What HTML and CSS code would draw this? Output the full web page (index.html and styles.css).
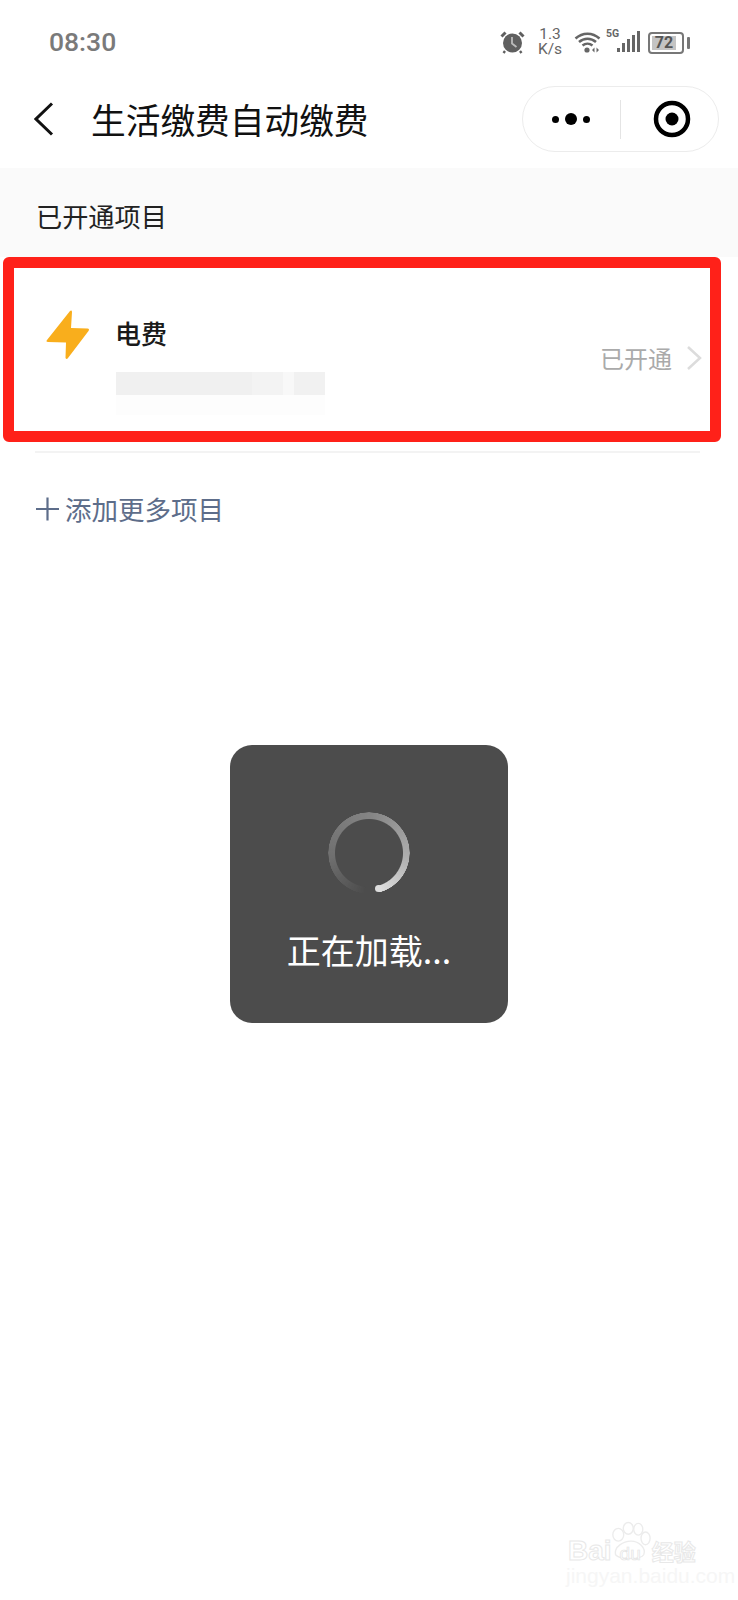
FILE: index.html
```html
<!DOCTYPE html>
<html lang="zh-CN">
<head>
<meta charset="utf-8">
<title>生活缴费自动缴费</title>
<link rel="stylesheet" href="styles.css">
</head>
<body>
<div class="page">
  <div class="status">
    <span class="time">08:30</span>
    <div class="status-icons">
      <svg class="ic-alarm" width="25" height="24" viewBox="0 0 25 24"><circle cx="12.500" cy="13" r="9.500" fill="#5f5f5f"/><path d="M12 7V13.500L16.500 17" fill="none" stroke="#bbb" stroke-width="1.800"/><path d="M1.500 6.500L5.500 2.500M23.500 6.500L19.500 2.500" stroke="#5f5f5f" stroke-width="3"/><path d="M5 21L3.500 23M20 21L21.500 23" stroke="#5f5f5f" stroke-width="2.400"/></svg>
      <div class="speed"><span>1.3</span><span>K/s</span></div>
      <svg class="ic-wifi" width="27" height="24" viewBox="0 0 26 24"><path d="M1 8.500C8 2 18 2 25 8.500M4.500 12C9.500 7.500 16.500 7.500 21.500 12M8 15.500C11 13 15 13 18 15.500" fill="none" stroke="#666" stroke-width="2.500"/><circle cx="12.500" cy="20" r="2.600" fill="#666"/><path d="M20 17.500V22.500L17.500 20ZM22 17.500V22.500L24.500 20Z" fill="#666"/></svg>
      <span class="five-g">5G</span>
      <svg class="ic-signal" width="23" height="22" viewBox="0 0 23 22"><rect x="0" y="17" width="3" height="4" fill="#666"/><rect x="5" y="12" width="3" height="9" fill="#666"/><rect x="10" y="8" width="3" height="13" fill="#666"/><rect x="15" y="4" width="3" height="17" fill="#666"/><rect x="20" y="0" width="3" height="21" fill="#666"/></svg>
      <div class="battery"><div class="battery-body"><span class="battery-level">72</span></div><div class="battery-tip"></div></div>
    </div>
  </div>

  <div class="nav">
    <svg class="back" width="20" height="34" viewBox="0 0 20 34"><path d="M18 1.500L2 17L18 32.500" fill="none" stroke="#111" stroke-width="3"/></svg>
    <h1 class="title">生活缴费自动缴费</h1>
    <div class="capsule">
      <div class="dots"><i class="dot"></i><i class="dot dot-big"></i><i class="dot"></i></div>
      <div class="capsule-line"></div>
      <svg width="38" height="38" viewBox="0 0 38 38"><circle cx="19" cy="19" r="16" fill="none" stroke="#000" stroke-width="4.500"/><circle cx="19" cy="19" r="6.500" fill="#000"/></svg>
    </div>
  </div>

  <div class="section-head">已开通项目</div>

  <div class="item">
    <svg class="bolt" width="44" height="51" viewBox="0 0 44 50"><path d="M24 1.500C25 0.500 26 1 26 2.500L25 18.500L41.500 19C43 19 43.500 20 42.500 21.500L22 48.500C21 50 19.500 49.500 19.500 48L20 33L2 32.500C0.500 32.500 0 31.500 1 30.500Z" fill="#f9ae1c"/></svg>
    <div class="item-main">
      <div class="item-name">电费</div>
      <div class="blur-bar"></div>
      <div class="blur-bar-faint"></div>
    </div>
    <div class="item-state">
      <span class="state-text">已开通</span>
      <svg width="16" height="26" viewBox="0 0 16 26"><path d="M2 2L14 13L2 24" fill="none" stroke="#dcdcdc" stroke-width="2.500"/></svg>
    </div>
  </div>

  <div class="divider"></div>

  <div class="add">
    <svg width="23" height="24" viewBox="0 0 23 24"><path d="M0 12H23M11.500 0.500V23.500" stroke="#5d6d8a" stroke-width="2.200"/></svg>
    <span class="add-text">添加更多项目</span>
  </div>

  <div class="toast">
    <div class="spinner-wrap">
      <div class="spinner"></div>
      <i class="spinner-cap"></i>
    </div>
    <div class="toast-text">正在加载...</div>
  </div>

  <div class="watermark">
    <svg class="paw" width="40" height="44" viewBox="0 0 44 44"><g fill="#fff" stroke="#ececec" stroke-width="1.500"><ellipse cx="8" cy="14" rx="6" ry="7"/><ellipse cx="19" cy="7" rx="5.500" ry="6.500"/><ellipse cx="30" cy="8" rx="5" ry="6.500"/><ellipse cx="38" cy="18" rx="5" ry="7"/><path d="M5 36C3 27 14 21 22 21C31 21 39 29 36 36C33 41 10 42 5 36Z"/></g></svg>
    <div class="wm-line"><span class="wm-baidu">Bai</span><span class="wm-du">du</span><span class="wm-cn">经验</span></div>
    <div class="wm-url">jingyan.baidu.com</div>
  </div>
</div>
</body>
</html>
```

FILE: styles.css
```css
* { box-sizing: border-box; }
html, body { margin: 0; padding: 0; background: #fff; }
body { font-family: "Noto Sans CJK SC", "Noto Sans", sans-serif; }
.page { position: relative; width: 738px; height: 1600px; overflow: hidden; background: #fff; }

.status { height: 86px; display: flex; justify-content: space-between; padding: 27px 0 0 49px; }
.time { font-family: Roboto, sans-serif; font-size: 26.500px; font-weight: 500; line-height: 30px; color: #7a7a7a; }
.status-icons { display: flex; align-items: flex-start; padding-right: 48px; }
.ic-alarm { margin: 3px 0 0 0; }
.speed { display: flex; flex-direction: column; width: 24px; margin-left: 13px; font-family: Roboto, sans-serif; font-size: 15.500px; line-height: 15px; color: #666; text-align: center; }
.ic-wifi { margin: 3px 0 0 12px; }
.five-g { width: 11px; margin: 1px 0 0 5px; font-family: Roboto, sans-serif; font-size: 10.500px; line-height: 12px; font-weight: 700; color: #666; }
.ic-signal { margin: 4px 0 0 0; }
.battery { display: flex; align-items: center; margin: 5px 0 0 8px; height: 22px; }
.battery-body { width: 36px; height: 22px; padding: 2px; border: 2px solid #777; border-radius: 4px; }
.battery-level { display: block; width: 24px; height: 14px; background: #c4c4c4; font-family: Roboto, sans-serif; font-size: 16px; font-weight: 700; line-height: 14px; color: #555; text-align: center; }
.battery-tip { width: 3px; height: 12px; margin-left: 3px; background: #777; border-radius: 1px; }

.nav { height: 82px; display: flex; align-items: flex-start; padding: 0 19px 0 34px; }
.back { margin-top: 16px; flex: none; }
.title { flex: 1; margin: 13px 0 0 37px; font-size: 34.700px; font-weight: 400; line-height: 40px; color: #111; }
.capsule { width: 197px; height: 66px; display: flex; align-items: center; border: 1px solid #ececec; border-radius: 33px; background: #fff; }
.dots { display: flex; align-items: center; gap: 6px; margin-left: 29px; }
.dot { width: 7px; height: 7px; border-radius: 50%; background: #000; }
.dot-big { width: 12px; height: 12px; }
.capsule-line { width: 1px; height: 39px; margin: 0 32px 0 30px; background: #e4e4e4; }

.section-head { height: 89px; padding: 35px 0 0 36px; background: #fafafa; font-size: 26.200px; line-height: 26px; color: #222; }

.item { display: flex; height: 185px; margin: 0 17px 0 3px; border: 11px solid #ff2119; border-radius: 6px; background: #fff; }
.bolt { flex: none; margin: 41px 0 0 32px; }
.item-main { flex: 1; margin: 50px 0 0 25px; }
.item-name { font-size: 26px; font-weight: 500; line-height: 30px; color: #1a1a1a; }
.blur-bar { width: 209px; height: 23px; margin: 24px 0 0 1px; background: linear-gradient(90deg, #f0f0f0 0 65%, #f3f3f3 65% 80%, #f8f8f8 80% 85%, #f1f1f1 85% 100%); }
.blur-bar-faint { width: 209px; height: 20px; margin-left: 1px; background: #fdfdfd; }
.item-state { display: flex; align-items: center; gap: 14px; height: 30px; margin: 75px 8px 0 0; }
.state-text { font-size: 24px; line-height: 30px; color: #aaa; }

.divider { height: 2px; margin: 9px 38px 0 35px; background: #f3f3f3; }

.add { display: flex; align-items: center; gap: 6px; margin: 43px 0 0 36px; height: 26px; }
.add-text { font-size: 26.500px; line-height: 26px; color: #5d6d8a; }

.toast { position: absolute; left: 230px; top: 745px; width: 278px; height: 278px; display: flex; flex-direction: column; align-items: center; padding-top: 67px; border-radius: 22px; background: #4c4c4c; }
.spinner-wrap { position: relative; width: 82px; height: 82px; }
.spinner { width: 82px; height: 82px; border-radius: 50%; background: conic-gradient(from 165deg, rgba(255,255,255,0) 0deg, rgba(255,255,255,0) 20deg, rgba(255,255,255,.2) 100deg, rgba(255,255,255,.32) 200deg, rgba(255,255,255,.55) 290deg, rgba(255,255,255,.82) 360deg); -webkit-mask: radial-gradient(circle, transparent 33.500px, #000 34.500px, #000 40.500px, transparent 41px); mask: radial-gradient(circle, transparent 33.500px, #000 34.500px, #000 40.500px, transparent 41px); }
.spinner-cap { position: absolute; left: 47px; top: 73px; width: 7px; height: 7px; border-radius: 50%; background: #ddd; }
.toast-text { margin-top: 36px; font-size: 34px; line-height: 40px; color: #fff; }

.watermark { position: absolute; left: 566px; top: 1518px; width: 150px; height: 70px; }
.paw { position: absolute; left: 45px; top: 2px; }
.wm-line { position: absolute; left: 2px; top: 14px; display: flex; align-items: baseline; white-space: nowrap; }
.wm-baidu { font-family: "Liberation Sans", sans-serif; font-size: 28px; font-weight: 700; line-height: 36px; color: #fff; -webkit-text-stroke: 1px #e8e8e8; }
.wm-du { position: relative; margin-left: 8px; font-family: "Liberation Sans", sans-serif; font-size: 19px; line-height: 36px; color: #fff; -webkit-text-stroke: 0.700px #e4e4e4; }
.wm-cn { margin-left: 11px; font-size: 22px; font-weight: 700; line-height: 36px; color: #fff; -webkit-text-stroke: 1px #e8e8e8; }
.wm-url { position: absolute; left: 0; top: 48px; font-family: "Liberation Sans", sans-serif; font-size: 21px; line-height: 20px; color: #f6f6f6; white-space: nowrap; }
```
